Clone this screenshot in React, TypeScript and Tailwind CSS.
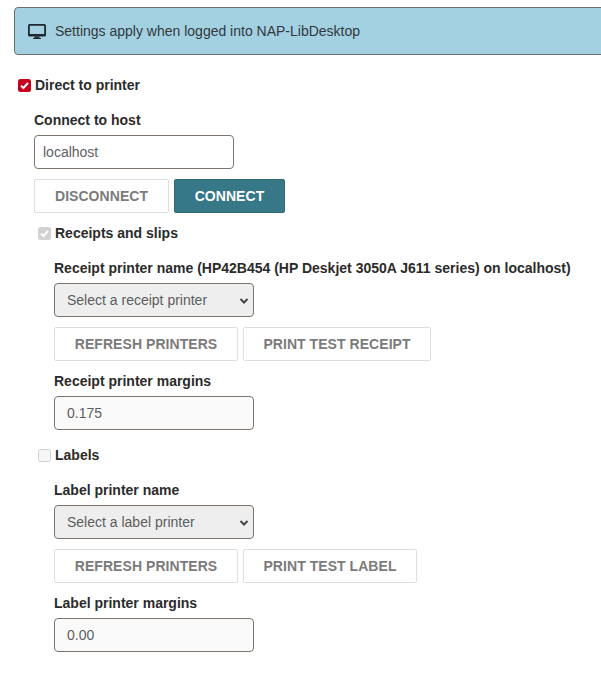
function Check({ color, checked, border }: { color: string; checked: boolean; border?: string }) {
  return (
    <span className={`w-[13px] h-[13px] rounded-[2.5px] flex items-center justify-center shrink-0 ${color} ${border ?? ""}`}>
      {checked && (
        <svg width="11" height="11" viewBox="0 0 11 11">
          <path d="M2 5.6 L4.4 8 L9 3" fill="none" stroke="white" strokeWidth="2" />
        </svg>
      )}
    </span>
  );
}
function Btn({ w, children }: { w: string; children: string }) {
  return (
    <div className={`${w} h-[34px] border border-[#dedede] rounded-[2px] bg-white flex items-center justify-center font-bold text-[14px] tracking-[0.05px] text-[#7b7b7b]`}>
      {children}
    </div>
  );
}
function Section({ nameLabel, selectText, testW, testText, marginLabel, margin }: { nameLabel: string; selectText: string; testW: string; testText: string; marginLabel: string; margin: string }) {
  return (
    <div className="ml-[20px] w-[540px]">
      <div className="h-[20px] leading-[20px] font-bold text-[14px] text-[#2b2b2b] whitespace-nowrap">{nameLabel}</div>
      <div className="relative mt-[5px] w-[200px] h-[34px] border border-[#7d756d] rounded-[4px] bg-[#eeeeee] pl-[12px] flex items-center text-[14px] text-[#5d5d5d]">
        {selectText}
        <svg className="absolute right-[3px] top-[11px]" width="12" height="12" viewBox="0 0 12 12">
          <path d="M2.5 4 L6 7.5 L9.5 4" fill="none" stroke="#444" strokeWidth="2" />
        </svg>
      </div>
      <div className="flex gap-[5px] mt-[10px]">
        <Btn w="w-[184px]">REFRESH PRINTERS</Btn>
        <Btn w={testW}>{testText}</Btn>
      </div>
      <div className="mt-[10px] h-[20px] leading-[20px] font-bold text-[14px] text-[#2b2b2b]">{marginLabel}</div>
      <div className="mt-[5px] w-[200px] h-[34px] border border-[#7d756d] rounded-[4px] bg-[#fafafa] pl-[12px] flex items-center text-[14px] text-[#5d5d5d]">{margin}</div>
    </div>
  );
}
export default function App() {
  return (
    <div className="w-[601px] h-[682px] overflow-hidden bg-white font-['Liberation_Sans',Arial,sans-serif] text-[14px] pt-[7px] pl-[14px]">
      <div className="w-[600px] h-[48px] bg-[#a3d1e2] border border-[#6e6e6e] rounded-[4px] flex items-center pl-[12px] text-[#33383c]">
        <svg width="20" height="20" viewBox="0 0 20 20" className="mr-[8px] shrink-0">
          <path d="M1 4.5 Q1 3 2.5 3 H17.5 Q19 3 19 4.5 V14 Q19 15.5 17.5 15.5 H2.5 Q1 15.5 1 14 Z M2.8 4.8 V13 H17.2 V4.8 Z" fill="#1f2a30" fillRule="evenodd" />
          <path d="M7.5 15.5 H12.5 V17 H14 V18 H6 V17 H7.5 Z" fill="#1f2a30" />
        </svg>
        Settings apply when logged into NAP-LibDesktop
      </div>
      <div className="mt-[23px] ml-[4px] flex items-center gap-[4px] h-[14px] font-bold text-[#2b2b2b]">
        <Check color="bg-[#c8001e]" checked />
        Direct to printer
      </div>
      <div className="ml-[20px]">
        <div className="mt-[18px] h-[20px] leading-[20px] font-bold text-[#2b2b2b]">Connect to host</div>
        <div className="mt-[5px] w-[200px] h-[34px] border border-[#7d756d] rounded-[4px] bg-white pl-[8px] flex items-center text-[#5d6068]">localhost</div>
        <div className="flex gap-[5px] mt-[10px]">
          <Btn w="w-[135px]">DISCONNECT</Btn>
          <div className="w-[111px] h-[34px] rounded-[2px] bg-[#367788] border border-[#2f6a7a] flex items-center justify-center font-bold text-white tracking-[0.05px]">CONNECT</div>
        </div>
        <div className="mt-[14px] ml-[4px] flex items-center gap-[4px] h-[13px] font-bold text-[#2b2b2b]">
          <Check color="bg-[#d2d2d2]" checked />
          Receipts and slips
        </div>
        <div className="mt-[18px]">
          <Section nameLabel="Receipt printer name (HP42B454 (HP Deskjet 3050A J611 series) on localhost)" selectText="Select a receipt printer" testW="w-[188px]" testText="PRINT TEST RECEIPT" marginLabel="Receipt printer margins" margin="0.175" />
        </div>
        <div className="mt-[19px] ml-[4px] flex items-center gap-[4px] h-[13px] font-bold text-[#2b2b2b]">
          <Check color="bg-[#f7f7f7]" border="border border-[#cfcfcf]" checked={false} />
          Labels
        </div>
        <div className="mt-[18px]">
          <Section nameLabel="Label printer name" selectText="Select a label printer" testW="w-[174px]" testText="PRINT TEST LABEL" marginLabel="Label printer margins" margin="0.00" />
        </div>
      </div>
    </div>
  );
}
